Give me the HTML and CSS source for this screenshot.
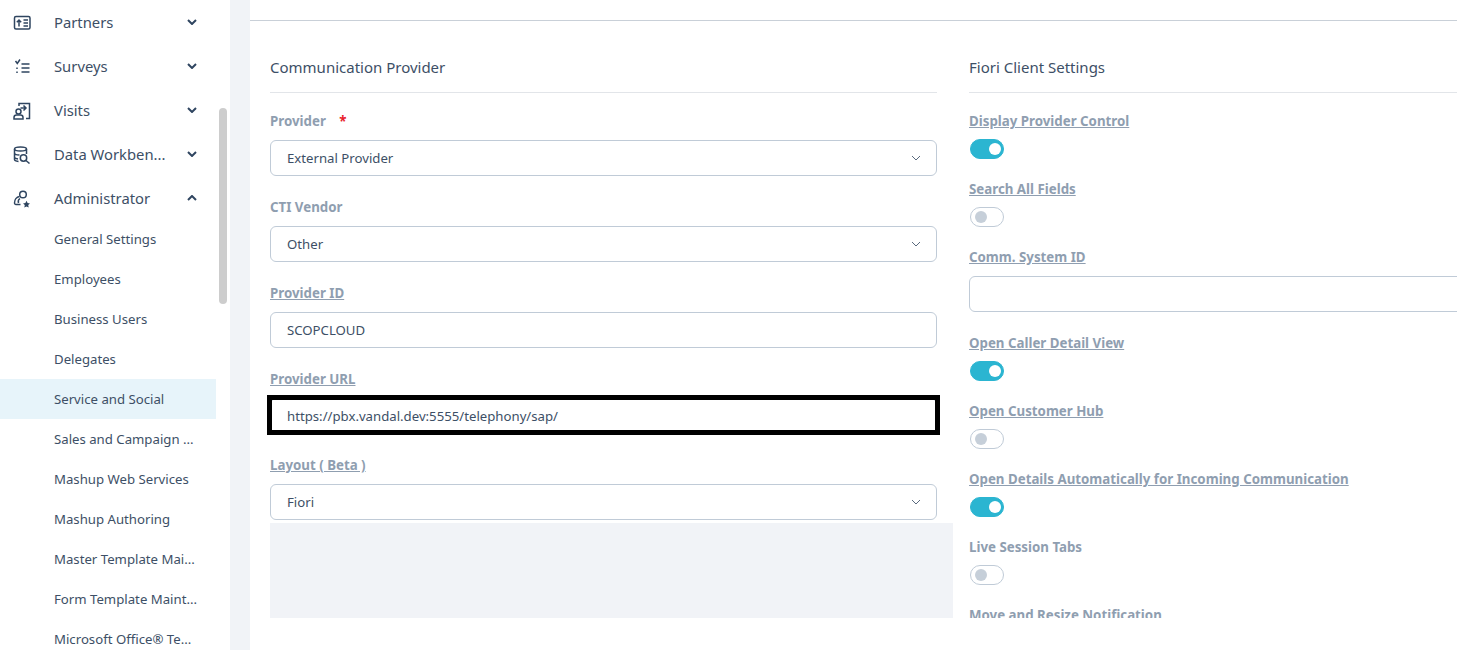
FILE: index.html
```html
<!DOCTYPE html>
<html lang="en">
<head>
<meta charset="utf-8">
<title>Communication Provider</title>
<link rel="stylesheet" href="styles.css">
</head>
<body>
<div class="app">
  <nav class="sidebar">
    <ul class="nav">
      <li class="nav-row">
        <svg class="nav-icon" viewBox="0 0 18 18"><rect x="1.500" y="2.500" width="15.500" height="12.500" rx="1.500"/><path d="M6 12.500V6M3.800 8.200 6 6l2.200 2.200M10.500 6H15M10.500 9H15M10.500 12H15"/></svg>
        <span class="nav-text">Partners</span>
        <svg class="chev" viewBox="0 0 10 6"><path d="M1 1l4 4 4-4"/></svg>
      </li>
      <li class="nav-row">
        <svg class="nav-icon" viewBox="0 0 18 18"><path d="M2.500 3l1.800 2.500L7 1.500M8.500 6h8M8.500 10h8M8.500 14h8M4 9.500v1.500M4 13.500v1.500"/></svg>
        <span class="nav-text">Surveys</span>
        <svg class="chev" viewBox="0 0 10 6"><path d="M1 1l4 4 4-4"/></svg>
      </li>
      <li class="nav-row">
        <svg class="nav-icon" viewBox="0 0 18 18"><path d="M6 4V1.500h10.500v15H13M7.500 6H13M10.500 3.500 13 6l-2.500 2.500"/><circle cx="5.500" cy="9.500" r="2.500"/><path d="M1 17v-1.500A2.500 2.500 0 0 1 3.500 13h4a2.500 2.500 0 0 1 2.500 2.500V17z"/></svg>
        <span class="nav-text">Visits</span>
        <svg class="chev" viewBox="0 0 10 6"><path d="M1 1l4 4 4-4"/></svg>
      </li>
      <li class="nav-row">
        <svg class="nav-icon" viewBox="0 0 18 18"><ellipse cx="7.500" cy="3" rx="6" ry="2"/><path d="M1.500 3v10.500c0 1 1.500 1.700 4 2M13.500 3v5M1.500 7c0 1 2 2 5 2M1.500 11c0 1 1.500 1.700 3.500 2"/><circle cx="10.500" cy="12" r="3.200"/><path d="M13 14.500l3.500 3"/></svg>
        <span class="nav-text">Data Workben...</span>
        <svg class="chev" viewBox="0 0 10 6"><path d="M1 1l4 4 4-4"/></svg>
      </li>
      <li class="nav-row">
        <svg class="nav-icon" viewBox="0 0 18 18"><circle cx="10" cy="4.500" r="3.300"/><path d="M6.500 6.500C3.500 7 1.500 10 1.500 13c0 2 2 1.500 4 1.500h2M7 8.500c-1.500 1-2 3-1.500 4.500"/><path class="star" d="M13.500 10.800l1.100 2.300 2.400.3-1.800 1.700.5 2.500-2.200-1.200-2.200 1.200.5-2.500-1.800-1.700 2.400-.3z"/></svg>
        <span class="nav-text">Administrator</span>
        <svg class="chev" viewBox="0 0 10 6"><path d="M1 5l4-4 4 4"/></svg>
      </li>
    </ul>
    <ul class="subnav">
      <li class="sub-row">General Settings</li>
      <li class="sub-row">Employees</li>
      <li class="sub-row">Business Users</li>
      <li class="sub-row">Delegates</li>
      <li class="sub-row active">Service and Social</li>
      <li class="sub-row">Sales and Campaign ...</li>
      <li class="sub-row">Mashup Web Services</li>
      <li class="sub-row">Mashup Authoring</li>
      <li class="sub-row">Master Template Mai...</li>
      <li class="sub-row">Form Template Maint...</li>
      <li class="sub-row">Microsoft Office® Te...</li>
    </ul>
    <div class="scroll-thumb"></div>
  </nav>
  <main class="main">
    <div class="topbar"></div>
    <div class="content">
      <section class="col col-left">
        <div class="col-inner">
          <h2 class="section-title">Communication Provider</h2>
          <div class="field">
            <div class="label">Provider <span class="req">*</span></div>
            <div class="input">External Provider<svg class="select-chev" viewBox="0 0 10 6"><path d="M1 1l4 4 4-4"/></svg></div>
          </div>
          <div class="field">
            <div class="label">CTI Vendor</div>
            <div class="input">Other<svg class="select-chev" viewBox="0 0 10 6"><path d="M1 1l4 4 4-4"/></svg></div>
          </div>
          <div class="field">
            <div class="label"><u>Provider ID</u></div>
            <div class="input">SCOPCLOUD</div>
          </div>
          <div class="field">
            <div class="label"><u>Provider URL</u></div>
            <div class="input marked">https://pbx.vandal.dev:5555/telephony/sap/</div>
          </div>
          <div class="field field-last">
            <div class="label"><u>Layout ( Beta )</u></div>
            <div class="input">Fiori<svg class="select-chev" viewBox="0 0 10 6"><path d="M1 1l4 4 4-4"/></svg></div>
          </div>
        </div>
        <div class="grey-block"></div>
      </section>
      <section class="col col-right">
        <h2 class="section-title">Fiori Client Settings</h2>
        <div class="tfield"><div class="label"><u>Display Provider Control</u></div><div class="toggle on"></div></div>
        <div class="tfield"><div class="label"><u>Search All Fields</u></div><div class="toggle"></div></div>
        <div class="field"><div class="label"><u>Comm. System ID</u></div><div class="input input-wide"></div></div>
        <div class="tfield"><div class="label"><u>Open Caller Detail View</u></div><div class="toggle on"></div></div>
        <div class="tfield"><div class="label"><u>Open Customer Hub</u></div><div class="toggle"></div></div>
        <div class="tfield"><div class="label"><u>Open Details Automatically for Incoming Communication</u></div><div class="toggle on"></div></div>
        <div class="tfield"><div class="label">Live Session Tabs</div><div class="toggle"></div></div>
        <div class="tfield"><div class="label"><u>Move and Resize Notification</u></div></div>
      </section>
    </div>
  </main>
</div>
</body>
</html>
```
FILE: styles.css
```css
* { box-sizing: border-box; }
html, body { margin: 0; height: 650px; overflow: hidden; background: #fff; }
body { font-family: "Noto Sans", "Open Sans", sans-serif; color: #354a5f; }
ul { list-style: none; margin: 0; padding: 0; }

.app { display: flex; height: 650px; background: #f1f3f7; }

.sidebar { position: relative; width: 230px; height: 650px; overflow: hidden; background: #fff; padding-top: 1px; flex: none; }
.nav-row { display: flex; align-items: center; height: 44px; padding: 0 33px 0 13px; }
.nav-icon { width: 18px; height: 18px; flex: none; fill: none; stroke: #2f4560; stroke-width: 1.500; }
.star { fill: #2f4560; stroke: none; }
.nav-text { flex: 1; margin: 0 0 2px 23px; font-size: 14.800px; white-space: nowrap; color: #3d4f66; }
.chev { width: 10px; height: 6px; flex: none; fill: none; stroke: #2f4560; stroke-width: 2; margin-bottom: 2px; }
.subnav { margin-top: -2px; width: 216px; }
.sub-row { height: 40px; line-height: 40px; padding-left: 54px; font-size: 13.200px; white-space: nowrap; color: #3d4f66; }
.sub-row.active { background: #e7f4fa; }
.scroll-thumb { position: absolute; left: 219px; top: 108px; width: 8px; height: 196px; border-radius: 4px; background: #cdcdcd; }

.main { flex: 1; min-width: 0; margin-left: 20px; height: 650px; background: #fff; overflow: hidden; }
.topbar { height: 21px; border-bottom: 1px solid #c9d0d8; }
.content { display: flex; height: 597px; overflow: hidden; padding: 0 0 0 20px; }
.col-left { width: 683px; flex: none; display: flex; flex-direction: column; }
.col-inner { width: 667px; }
.col-right { margin-left: 16px; flex: none; width: 520px; }

.section-title { margin: 0 0 18px; height: 72px; padding-top: 36px; line-height: 20px; font-size: 15px; font-weight: 400; color: #3d4f66; border-bottom: 1px solid #e2e5e9; }

.label { height: 20px; line-height: 20px; font-size: 13.300px; font-weight: 700; color: #8f9eb0; white-space: nowrap; }
.req { color: #e8212b; margin-left: 10px; }
.field { margin-bottom: 21px; }
.field-last { margin-bottom: 3px; }
.input { position: relative; display: flex; align-items: center; justify-content: space-between; height: 36px; margin-top: 9px; padding: 0 16px; border: 1px solid #c0cbd7; border-radius: 6px; background: #fff; font-size: 13.200px; color: #3d4f66; }
.input-wide { width: 520px; }
.select-chev { width: 10px; height: 6px; fill: none; stroke: #5a6a7e; stroke-width: 1; margin-right: -1px; }
.marked::after { content: ""; position: absolute; left: -4px; right: -4px; top: -4px; bottom: -2px; border: 5px solid #000; }
.grey-block { flex: 1; background: #f1f3f7; }

.tfield { height: 48px; margin-bottom: 20px; }
.toggle { position: relative; width: 34px; height: 20px; margin: 8px 0 0 1px; border: 1px solid #c0cbd7; border-radius: 10px; background: #fff; }
.toggle::after { content: ""; position: absolute; left: 4px; top: 3px; width: 12px; height: 12px; border-radius: 50%; background: #c6cfd9; }
.toggle.on { background: #2bb5d1; border-color: #2bb5d1; }
.toggle.on::after { left: 18px; background: #fff; }
```
